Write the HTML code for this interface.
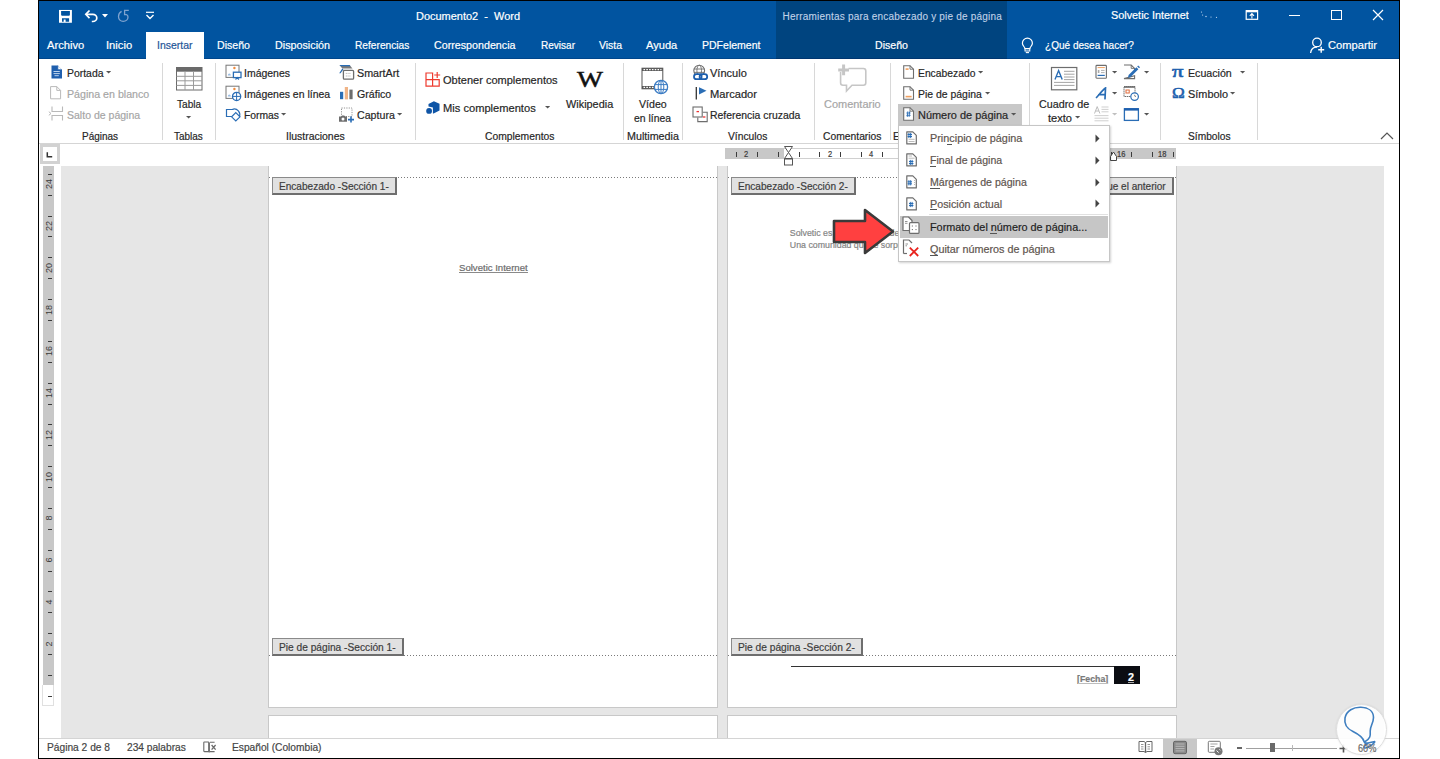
<!DOCTYPE html>
<html><head><meta charset="utf-8"><style>
html,body{margin:0;padding:0;width:1440px;height:759px;overflow:hidden;background:#fff;}
body{position:relative;font-family:"Liberation Sans", sans-serif;}
div{position:absolute;box-sizing:border-box;}
.t{white-space:pre;transform-origin:0 0;-webkit-text-stroke:0.2px currentColor;}
.r{white-space:pre;}
</style></head><body>
<div style="left:38px;top:0px;width:1362px;height:759px;background:#000;"></div>
<div style="left:39px;top:1px;width:1360px;height:58px;background:#0154a0;"></div>
<div style="left:39px;top:58px;width:1360px;height:1px;background:#00468c;"></div>
<div style="left:776px;top:1px;width:231px;height:58px;background:#00447f;"></div>
<div style="left:776px;top:58px;width:231px;height:1px;background:#003670;"></div>
<div style="left:39px;top:59px;width:1360px;height:699px;background:#ffffff;"></div>
<div style="left:146px;top:32px;width:58px;height:27px;background:#ffffff;"></div>
<div style="left:39px;top:143px;width:1360px;height:1px;background:#d5d5d5;"></div>
<div style="left:61px;top:166px;width:1323px;height:572px;background:#e6e6e6;"></div>
<div style="left:268px;top:166px;width:450px;height:542px;background:#fff;border:1px solid #c8c8c8;border-top:none;"></div>
<div style="left:727px;top:166px;width:450px;height:542px;background:#fff;border:1px solid #c8c8c8;border-top:none;"></div>
<div style="left:268px;top:715px;width:450px;height:23px;background:#fff;border:1px solid #c8c8c8;border-bottom:none;"></div>
<div style="left:727px;top:715px;width:450px;height:23px;background:#fff;border:1px solid #c8c8c8;border-bottom:none;"></div>
<div style="left:39px;top:738px;width:1360px;height:20px;background:#ffffff;"></div>
<div style="left:39px;top:738px;width:1360px;height:1px;background:#d4d4d4;"></div>
<div class="t" id="t0" style="left:416px;top:10.69px;font-size:11px;line-height:11px;color:#ffffff;font-weight:400;transform:scaleX(0.9967);">Documento2  -  Word</div>
<div class="t" id="t1" style="left:782.5px;top:12.04px;font-size:10px;line-height:10px;color:#c0d2e8;font-weight:400;letter-spacing:0.2px;-webkit-text-stroke:0.1px currentColor;">Herramientas para encabezado y pie de página</div>
<div class="t" id="t2" style="left:1110.5px;top:10.19px;font-size:11px;line-height:11px;color:#ffffff;font-weight:400;transform:scaleX(0.9857);">Solvetic Internet</div>
<div class="t" id="t3" style="left:47px;top:40.22px;font-size:11.5px;line-height:11.5px;color:#ffffff;font-weight:400;transform:scaleX(0.9724);">Archivo</div>
<div class="t" id="t4" style="left:105.5px;top:40.22px;font-size:11.5px;line-height:11.5px;color:#ffffff;font-weight:400;transform:scaleX(0.9755);">Inicio</div>
<div class="t" id="t5" style="left:216.7px;top:40.22px;font-size:11.5px;line-height:11.5px;color:#ffffff;font-weight:400;transform:scaleX(0.9215);">Diseño</div>
<div class="t" id="t6" style="left:274.5px;top:40.22px;font-size:11.5px;line-height:11.5px;color:#ffffff;font-weight:400;transform:scaleX(0.9352);">Disposición</div>
<div class="t" id="t7" style="left:354.7px;top:40.22px;font-size:11.5px;line-height:11.5px;color:#ffffff;font-weight:400;transform:scaleX(0.8847);">Referencias</div>
<div class="t" id="t8" style="left:434.25px;top:40.22px;font-size:11.5px;line-height:11.5px;color:#ffffff;font-weight:400;transform:scaleX(0.9304);">Correspondencia</div>
<div class="t" id="t9" style="left:540.5px;top:40.22px;font-size:11.5px;line-height:11.5px;color:#ffffff;font-weight:400;transform:scaleX(0.8721);">Revisar</div>
<div class="t" id="t10" style="left:598.75px;top:40.22px;font-size:11.5px;line-height:11.5px;color:#ffffff;font-weight:400;transform:scaleX(0.9070);">Vista</div>
<div class="t" id="t11" style="left:646.25px;top:40.22px;font-size:11.5px;line-height:11.5px;color:#ffffff;font-weight:400;transform:scaleX(0.9643);">Ayuda</div>
<div class="t" id="t12" style="left:702px;top:40.22px;font-size:11.5px;line-height:11.5px;color:#ffffff;font-weight:400;transform:scaleX(0.9152);">PDFelement</div>
<div class="t" id="t13" style="left:874.5px;top:40.22px;font-size:11.5px;line-height:11.5px;color:#ffffff;font-weight:400;transform:scaleX(0.9215);">Diseño</div>
<div class="t" id="t14" style="left:1045px;top:40.22px;font-size:11.5px;line-height:11.5px;color:#ffffff;font-weight:400;transform:scaleX(0.8730);">¿Qué desea hacer?</div>
<div class="t" id="t15" style="left:1328px;top:40.22px;font-size:11.5px;line-height:11.5px;color:#ffffff;font-weight:400;transform:scaleX(0.9706);">Compartir</div>
<div class="t" id="t16" style="left:156.7px;top:40.22px;font-size:11.5px;line-height:11.5px;color:#1f5597;font-weight:400;transform:scaleX(0.9103);">Insertar</div>
<div class="t" id="t17" style="left:66.75px;top:67.67px;font-size:11.5px;line-height:11.5px;color:#262626;font-weight:400;transform:scaleX(0.9061);">Portada</div>
<div class="t" id="t18" style="left:66.75px;top:88.77px;font-size:11.5px;line-height:11.5px;color:#a6a6a6;font-weight:400;transform:scaleX(0.9253);">Página en blanco</div>
<div class="t" id="t19" style="left:66.75px;top:109.87px;font-size:11.5px;line-height:11.5px;color:#a6a6a6;font-weight:400;transform:scaleX(0.9151);">Salto de página</div>
<div class="t" id="t20" style="left:82px;top:130.87px;font-size:11.5px;line-height:11.5px;color:#262626;font-weight:400;transform:scaleX(0.8662);">Páginas</div>
<div class="t" id="t21" style="left:177px;top:98.87px;font-size:11.5px;line-height:11.5px;color:#262626;font-weight:400;transform:scaleX(0.8764);">Tabla</div>
<div class="t" id="t22" style="left:174px;top:130.87px;font-size:11.5px;line-height:11.5px;color:#262626;font-weight:400;transform:scaleX(0.8647);">Tablas</div>
<div class="t" id="t23" style="left:243.5px;top:67.67px;font-size:11.5px;line-height:11.5px;color:#262626;font-weight:400;transform:scaleX(0.9106);">Imágenes</div>
<div class="t" id="t24" style="left:243.5px;top:88.77px;font-size:11.5px;line-height:11.5px;color:#262626;font-weight:400;transform:scaleX(0.9099);">Imágenes en línea</div>
<div class="t" id="t25" style="left:243.5px;top:109.87px;font-size:11.5px;line-height:11.5px;color:#262626;font-weight:400;transform:scaleX(0.8978);">Formas</div>
<div class="t" id="t26" style="left:356.6px;top:67.67px;font-size:11.5px;line-height:11.5px;color:#262626;font-weight:400;transform:scaleX(0.9322);">SmartArt</div>
<div class="t" id="t27" style="left:356.6px;top:88.77px;font-size:11.5px;line-height:11.5px;color:#262626;font-weight:400;transform:scaleX(0.9224);">Gráfico</div>
<div class="t" id="t28" style="left:356.6px;top:109.87px;font-size:11.5px;line-height:11.5px;color:#262626;font-weight:400;transform:scaleX(0.9262);">Captura</div>
<div class="t" id="t29" style="left:285.5px;top:130.87px;font-size:11.5px;line-height:11.5px;color:#262626;font-weight:400;transform:scaleX(0.9092);">Ilustraciones</div>
<div class="t" id="t30" style="left:443.3px;top:75.47px;font-size:11.5px;line-height:11.5px;color:#262626;font-weight:400;transform:scaleX(0.9586);">Obtener complementos</div>
<div class="t" id="t31" style="left:443.3px;top:103.47px;font-size:11.5px;line-height:11.5px;color:#262626;font-weight:400;transform:scaleX(0.9669);">Mis complementos</div>
<div class="t" id="t32" style="left:566px;top:98.97px;font-size:11.5px;line-height:11.5px;color:#262626;font-weight:400;transform:scaleX(0.9467);">Wikipedia</div>
<div class="t" id="t33" style="left:484.6px;top:130.87px;font-size:11.5px;line-height:11.5px;color:#262626;font-weight:400;transform:scaleX(0.8973);">Complementos</div>
<div class="t" id="t34" style="left:639px;top:98.97px;font-size:11.5px;line-height:11.5px;color:#262626;font-weight:400;transform:scaleX(0.9214);">Vídeo</div>
<div class="t" id="t35" style="left:634px;top:113.47px;font-size:11.5px;line-height:11.5px;color:#262626;font-weight:400;transform:scaleX(0.9038);">en línea</div>
<div class="t" id="t36" style="left:626.8px;top:130.87px;font-size:11.5px;line-height:11.5px;color:#262626;font-weight:400;transform:scaleX(0.9333);">Multimedia</div>
<div class="t" id="t37" style="left:710px;top:67.67px;font-size:11.5px;line-height:11.5px;color:#262626;font-weight:400;transform:scaleX(0.9593);">Vínculo</div>
<div class="t" id="t38" style="left:710px;top:88.77px;font-size:11.5px;line-height:11.5px;color:#262626;font-weight:400;transform:scaleX(0.9675);">Marcador</div>
<div class="t" id="t39" style="left:710px;top:109.87px;font-size:11.5px;line-height:11.5px;color:#262626;font-weight:400;transform:scaleX(0.9064);">Referencia cruzada</div>
<div class="t" id="t40" style="left:728px;top:130.87px;font-size:11.5px;line-height:11.5px;color:#262626;font-weight:400;transform:scaleX(0.8932);">Vínculos</div>
<div class="t" id="t41" style="left:823.8px;top:98.97px;font-size:11.5px;line-height:11.5px;color:#a6a6a6;font-weight:400;transform:scaleX(0.9537);">Comentario</div>
<div class="t" id="t42" style="left:823px;top:130.87px;font-size:11.5px;line-height:11.5px;color:#262626;font-weight:400;transform:scaleX(0.8972);">Comentarios</div>
<div class="t" id="t43" style="left:918.4px;top:67.67px;font-size:11.5px;line-height:11.5px;color:#262626;font-weight:400;transform:scaleX(0.8975);">Encabezado</div>
<div class="t" id="t44" style="left:918.4px;top:88.77px;font-size:11.5px;line-height:11.5px;color:#262626;font-weight:400;transform:scaleX(0.9070);">Pie de página</div>
<div class="t" id="t45" style="left:1038.6px;top:98.97px;font-size:11.5px;line-height:11.5px;color:#262626;font-weight:400;transform:scaleX(0.9345);">Cuadro de</div>
<div class="t" id="t46" style="left:1048px;top:113.47px;font-size:11.5px;line-height:11.5px;color:#262626;font-weight:400;transform:scaleX(0.9624);">texto</div>
<div class="t" id="t47" style="left:1188px;top:67.67px;font-size:11.5px;line-height:11.5px;color:#262626;font-weight:400;transform:scaleX(0.9247);">Ecuación</div>
<div class="t" id="t48" style="left:1188px;top:88.77px;font-size:11.5px;line-height:11.5px;color:#262626;font-weight:400;transform:scaleX(0.9481);">Símbolo</div>
<div class="t" id="t49" style="left:1187.5px;top:130.87px;font-size:11.5px;line-height:11.5px;color:#262626;font-weight:400;transform:scaleX(0.8866);">Símbolos</div>
<div class="t" id="t50" style="left:893px;top:130.87px;font-size:11.5px;line-height:11.5px;color:#262626;font-weight:400;transform:scaleX(0.9124);">E</div>
<div style="left:898px;top:104px;width:124px;height:21px;background:#c8c8c8;"></div>
<div class="t" id="t51" style="left:918.4px;top:109.87px;font-size:11.5px;line-height:11.5px;color:#262626;font-weight:400;transform:scaleX(0.9522);">Número de página</div>
<div class="t" id="t52" style="left:46.5px;top:741.69px;font-size:11px;line-height:11px;color:#444444;font-weight:400;transform:scaleX(0.9280);">Página 2 de 8</div>
<div class="t" id="t53" style="left:126.5px;top:741.69px;font-size:11px;line-height:11px;color:#444444;font-weight:400;transform:scaleX(0.9244);">234 palabras</div>
<div class="t" id="t54" style="left:231.75px;top:741.69px;font-size:11px;line-height:11px;color:#444444;font-weight:400;transform:scaleX(0.9264);">Español (Colombia)</div>
<div style="left:162px;top:63px;width:1px;height:77px;background:#d8d8d8;"></div>
<div style="left:215px;top:63px;width:1px;height:77px;background:#d8d8d8;"></div>
<div style="left:415px;top:63px;width:1px;height:77px;background:#d8d8d8;"></div>
<div style="left:623px;top:63px;width:1px;height:77px;background:#d8d8d8;"></div>
<div style="left:682px;top:63px;width:1px;height:77px;background:#d8d8d8;"></div>
<div style="left:814px;top:63px;width:1px;height:77px;background:#d8d8d8;"></div>
<div style="left:890px;top:63px;width:1px;height:77px;background:#d8d8d8;"></div>
<div style="left:1029px;top:63px;width:1px;height:77px;background:#d8d8d8;"></div>
<div style="left:1160px;top:63px;width:1px;height:77px;background:#d8d8d8;"></div>
<div style="left:1257px;top:63px;width:1px;height:77px;background:#d8d8d8;"></div>
<svg style="position:absolute;left:106.0px;top:71.2px;" width="5.2" height="3.6" viewBox="0 0 5.2 3.6"><path d="M0 0 L5.2 0 L2.6 2.6 Z" fill="#555"/></svg>
<svg style="position:absolute;left:281.4px;top:113.2px;" width="5.2" height="3.6" viewBox="0 0 5.2 3.6"><path d="M0 0 L5.2 0 L2.6 2.6 Z" fill="#555"/></svg>
<svg style="position:absolute;left:397.0px;top:113.2px;" width="5.2" height="3.6" viewBox="0 0 5.2 3.6"><path d="M0 0 L5.2 0 L2.6 2.6 Z" fill="#555"/></svg>
<svg style="position:absolute;left:544.9px;top:106.2px;" width="5.2" height="3.6" viewBox="0 0 5.2 3.6"><path d="M0 0 L5.2 0 L2.6 2.6 Z" fill="#555"/></svg>
<svg style="position:absolute;left:978.1px;top:71.2px;" width="5.2" height="3.6" viewBox="0 0 5.2 3.6"><path d="M0 0 L5.2 0 L2.6 2.6 Z" fill="#555"/></svg>
<svg style="position:absolute;left:985.4px;top:92.2px;" width="5.2" height="3.6" viewBox="0 0 5.2 3.6"><path d="M0 0 L5.2 0 L2.6 2.6 Z" fill="#555"/></svg>
<svg style="position:absolute;left:1010.6999999999999px;top:113.2px;" width="5.2" height="3.6" viewBox="0 0 5.2 3.6"><path d="M0 0 L5.2 0 L2.6 2.6 Z" fill="#555"/></svg>
<svg style="position:absolute;left:1074.9px;top:116.2px;" width="5.2" height="3.6" viewBox="0 0 5.2 3.6"><path d="M0 0 L5.2 0 L2.6 2.6 Z" fill="#555"/></svg>
<svg style="position:absolute;left:1112.2px;top:71.2px;" width="5.2" height="3.6" viewBox="0 0 5.2 3.6"><path d="M0 0 L5.2 0 L2.6 2.6 Z" fill="#555"/></svg>
<svg style="position:absolute;left:1112.2px;top:92.2px;" width="5.2" height="3.6" viewBox="0 0 5.2 3.6"><path d="M0 0 L5.2 0 L2.6 2.6 Z" fill="#555"/></svg>
<svg style="position:absolute;left:1144.4px;top:71.2px;" width="5.2" height="3.6" viewBox="0 0 5.2 3.6"><path d="M0 0 L5.2 0 L2.6 2.6 Z" fill="#555"/></svg>
<svg style="position:absolute;left:1144.4px;top:113.2px;" width="5.2" height="3.6" viewBox="0 0 5.2 3.6"><path d="M0 0 L5.2 0 L2.6 2.6 Z" fill="#555"/></svg>
<svg style="position:absolute;left:1240.4px;top:71.2px;" width="5.2" height="3.6" viewBox="0 0 5.2 3.6"><path d="M0 0 L5.2 0 L2.6 2.6 Z" fill="#555"/></svg>
<svg style="position:absolute;left:1230.4px;top:92.2px;" width="5.2" height="3.6" viewBox="0 0 5.2 3.6"><path d="M0 0 L5.2 0 L2.6 2.6 Z" fill="#555"/></svg>
<svg style="position:absolute;left:186.4px;top:116.2px;" width="5.2" height="3.6" viewBox="0 0 5.2 3.6"><path d="M0 0 L5.2 0 L2.6 2.6 Z" fill="#555"/></svg>
<svg style="position:absolute;left:1112.2px;top:113.2px;" width="5.2" height="3.6" viewBox="0 0 5.2 3.6"><path d="M0 0 L5.2 0 L2.6 2.6 Z" fill="#c0c0c0"/></svg>
<svg style="position:absolute;left:1380px;top:132px;" width="14" height="8" viewBox="0 0 14 8"><path d="M1 7 L7 1 L13 7" stroke="#555" stroke-width="1.2" fill="none"/></svg>
<div style="left:40px;top:144px;width:20px;height:20px;background:#fff;border:3px solid #d2d2d2;"></div>
<svg style="position:absolute;left:46px;top:151px;" width="8" height="8" viewBox="0 0 8 8"><path d="M1.3 1.2 V5.8 H6.2" stroke="#333" stroke-width="1.5" fill="none"/></svg>
<div style="left:725px;top:148px;width:60px;height:11px;background:#c8c8c8;"></div>
<div style="left:784px;top:148px;width:326px;height:11px;background:#fff;border-top:1px solid #d0d0d0;border-bottom:1px solid #d0d0d0;"></div>
<div style="left:1110px;top:148px;width:66px;height:11px;background:#c8c8c8;"></div>
<div style="left:736px;top:152px;width:1px;height:5px;background:#3c3c3c;"></div>
<div style="left:757px;top:152px;width:1px;height:5px;background:#3c3c3c;"></div>
<div style="left:778px;top:152px;width:1px;height:5px;background:#3c3c3c;"></div>
<div style="left:799px;top:152px;width:1px;height:5px;background:#3c3c3c;"></div>
<div style="left:819px;top:152px;width:1px;height:5px;background:#3c3c3c;"></div>
<div style="left:840px;top:152px;width:1px;height:5px;background:#3c3c3c;"></div>
<div style="left:861px;top:152px;width:1px;height:5px;background:#3c3c3c;"></div>
<div style="left:882px;top:152px;width:1px;height:5px;background:#3c3c3c;"></div>
<div style="left:903px;top:152px;width:1px;height:5px;background:#3c3c3c;"></div>
<div style="left:923px;top:152px;width:1px;height:5px;background:#3c3c3c;"></div>
<div style="left:944px;top:152px;width:1px;height:5px;background:#3c3c3c;"></div>
<div style="left:965px;top:152px;width:1px;height:5px;background:#3c3c3c;"></div>
<div style="left:986px;top:152px;width:1px;height:5px;background:#3c3c3c;"></div>
<div style="left:1007px;top:152px;width:1px;height:5px;background:#3c3c3c;"></div>
<div style="left:1027px;top:152px;width:1px;height:5px;background:#3c3c3c;"></div>
<div style="left:1048px;top:152px;width:1px;height:5px;background:#3c3c3c;"></div>
<div style="left:1069px;top:152px;width:1px;height:5px;background:#3c3c3c;"></div>
<div style="left:1090px;top:152px;width:1px;height:5px;background:#3c3c3c;"></div>
<div style="left:1111px;top:152px;width:1px;height:5px;background:#3c3c3c;"></div>
<div style="left:1131px;top:152px;width:1px;height:5px;background:#3c3c3c;"></div>
<div style="left:1152px;top:152px;width:1px;height:5px;background:#3c3c3c;"></div>
<div style="left:1173px;top:152px;width:1px;height:5px;background:#3c3c3c;"></div>
<div class="t" id="t55" style="left:744.3px;top:149.88px;font-size:9px;line-height:9px;color:#3a3a3a;font-weight:400;transform:scaleX(0.8374);">2</div>
<div class="t" id="t56" style="left:827.5px;top:149.88px;font-size:9px;line-height:9px;color:#3a3a3a;font-weight:400;transform:scaleX(0.8374);">2</div>
<div class="t" id="t57" style="left:869.1px;top:149.88px;font-size:9px;line-height:9px;color:#3a3a3a;font-weight:400;transform:scaleX(0.8374);">4</div>
<div class="t" id="t58" style="left:910.7px;top:149.88px;font-size:9px;line-height:9px;color:#3a3a3a;font-weight:400;transform:scaleX(0.8374);">6</div>
<div class="t" id="t59" style="left:952.3px;top:149.88px;font-size:9px;line-height:9px;color:#3a3a3a;font-weight:400;transform:scaleX(0.8374);">8</div>
<div class="t" id="t60" style="left:991.8px;top:149.88px;font-size:9px;line-height:9px;color:#3a3a3a;font-weight:400;transform:scaleX(0.8387);">10</div>
<div class="t" id="t61" style="left:1033.4px;top:149.88px;font-size:9px;line-height:9px;color:#3a3a3a;font-weight:400;transform:scaleX(0.8387);">12</div>
<div class="t" id="t62" style="left:1075.0px;top:149.88px;font-size:9px;line-height:9px;color:#3a3a3a;font-weight:400;transform:scaleX(0.8387);">14</div>
<div class="t" id="t63" style="left:1116.6000000000001px;top:149.88px;font-size:9px;line-height:9px;color:#3a3a3a;font-weight:400;transform:scaleX(0.8387);">16</div>
<div class="t" id="t64" style="left:1158.2px;top:149.88px;font-size:9px;line-height:9px;color:#3a3a3a;font-weight:400;transform:scaleX(0.8387);">18</div>
<svg style="position:absolute;left:783px;top:145px;" width="11" height="21" viewBox="0 0 11 21"><path d="M1.5 1.5 H9.5 L5.5 7.5 L9.5 13.5 H1.5 L5.5 7.5 Z" fill="#fff" stroke="#555" stroke-width="1"/><rect x="1.5" y="14" width="8" height="6" fill="#fff" stroke="#555" stroke-width="1"/></svg>
<svg style="position:absolute;left:1109px;top:150px;" width="9" height="12" viewBox="0 0 9 12"><path d="M1.5 10.5 H7.5 V6.5 L4.5 2 L1.5 6.5 Z" fill="#fff" stroke="#444" stroke-width="1"/></svg>
<div style="left:43px;top:166px;width:11px;height:519px;background:#c8c8c8;"></div>
<div style="left:42px;top:685px;width:12px;height:21px;background:#fff;border:1px solid #e0e0e0;border-top:none;"></div>
<div style="left:48px;top:696px;width:4px;height:1px;background:#3c3c3c;"></div>
<div style="left:48px;top:675px;width:4px;height:1px;background:#3c3c3c;"></div>
<div style="left:48px;top:654px;width:4px;height:1px;background:#3c3c3c;"></div>
<div style="left:48px;top:633px;width:4px;height:1px;background:#3c3c3c;"></div>
<div style="left:48px;top:612px;width:4px;height:1px;background:#3c3c3c;"></div>
<div style="left:48px;top:591px;width:4px;height:1px;background:#3c3c3c;"></div>
<div style="left:48px;top:571px;width:4px;height:1px;background:#3c3c3c;"></div>
<div style="left:48px;top:550px;width:4px;height:1px;background:#3c3c3c;"></div>
<div style="left:48px;top:529px;width:4px;height:1px;background:#3c3c3c;"></div>
<div style="left:48px;top:508px;width:4px;height:1px;background:#3c3c3c;"></div>
<div style="left:48px;top:487px;width:4px;height:1px;background:#3c3c3c;"></div>
<div style="left:48px;top:466px;width:4px;height:1px;background:#3c3c3c;"></div>
<div style="left:48px;top:445px;width:4px;height:1px;background:#3c3c3c;"></div>
<div style="left:48px;top:424px;width:4px;height:1px;background:#3c3c3c;"></div>
<div style="left:48px;top:404px;width:4px;height:1px;background:#3c3c3c;"></div>
<div style="left:48px;top:383px;width:4px;height:1px;background:#3c3c3c;"></div>
<div style="left:48px;top:362px;width:4px;height:1px;background:#3c3c3c;"></div>
<div style="left:48px;top:341px;width:4px;height:1px;background:#3c3c3c;"></div>
<div style="left:48px;top:320px;width:4px;height:1px;background:#3c3c3c;"></div>
<div style="left:48px;top:299px;width:4px;height:1px;background:#3c3c3c;"></div>
<div style="left:48px;top:278px;width:4px;height:1px;background:#3c3c3c;"></div>
<div style="left:48px;top:257px;width:4px;height:1px;background:#3c3c3c;"></div>
<div style="left:48px;top:236px;width:4px;height:1px;background:#3c3c3c;"></div>
<div style="left:48px;top:216px;width:4px;height:1px;background:#3c3c3c;"></div>
<div style="left:48px;top:195px;width:4px;height:1px;background:#3c3c3c;"></div>
<div style="left:48px;top:174px;width:4px;height:1px;background:#3c3c3c;"></div>
<div class="r" style="left:49.4px;top:643.64px;width:0;height:0"><div class="r" style="left:0;top:0;font-size:9px;line-height:9px;color:#3a3a3a;transform:translate(-50%,-50%) rotate(-90deg)">2</div></div>
<div class="r" style="left:49.4px;top:601.88px;width:0;height:0"><div class="r" style="left:0;top:0;font-size:9px;line-height:9px;color:#3a3a3a;transform:translate(-50%,-50%) rotate(-90deg)">4</div></div>
<div class="r" style="left:49.4px;top:560.12px;width:0;height:0"><div class="r" style="left:0;top:0;font-size:9px;line-height:9px;color:#3a3a3a;transform:translate(-50%,-50%) rotate(-90deg)">6</div></div>
<div class="r" style="left:49.4px;top:518.36px;width:0;height:0"><div class="r" style="left:0;top:0;font-size:9px;line-height:9px;color:#3a3a3a;transform:translate(-50%,-50%) rotate(-90deg)">8</div></div>
<div class="r" style="left:49.4px;top:476.60px;width:0;height:0"><div class="r" style="left:0;top:0;font-size:9px;line-height:9px;color:#3a3a3a;transform:translate(-50%,-50%) rotate(-90deg)">10</div></div>
<div class="r" style="left:49.4px;top:434.84px;width:0;height:0"><div class="r" style="left:0;top:0;font-size:9px;line-height:9px;color:#3a3a3a;transform:translate(-50%,-50%) rotate(-90deg)">12</div></div>
<div class="r" style="left:49.4px;top:393.08px;width:0;height:0"><div class="r" style="left:0;top:0;font-size:9px;line-height:9px;color:#3a3a3a;transform:translate(-50%,-50%) rotate(-90deg)">14</div></div>
<div class="r" style="left:49.4px;top:351.32px;width:0;height:0"><div class="r" style="left:0;top:0;font-size:9px;line-height:9px;color:#3a3a3a;transform:translate(-50%,-50%) rotate(-90deg)">16</div></div>
<div class="r" style="left:49.4px;top:309.56px;width:0;height:0"><div class="r" style="left:0;top:0;font-size:9px;line-height:9px;color:#3a3a3a;transform:translate(-50%,-50%) rotate(-90deg)">18</div></div>
<div class="r" style="left:49.4px;top:267.80px;width:0;height:0"><div class="r" style="left:0;top:0;font-size:9px;line-height:9px;color:#3a3a3a;transform:translate(-50%,-50%) rotate(-90deg)">20</div></div>
<div class="r" style="left:49.4px;top:226.04px;width:0;height:0"><div class="r" style="left:0;top:0;font-size:9px;line-height:9px;color:#3a3a3a;transform:translate(-50%,-50%) rotate(-90deg)">22</div></div>
<div class="r" style="left:49.4px;top:184.28px;width:0;height:0"><div class="r" style="left:0;top:0;font-size:9px;line-height:9px;color:#3a3a3a;transform:translate(-50%,-50%) rotate(-90deg)">24</div></div>
<div style="left:269px;top:177px;width:448px;height:1px;background-image:linear-gradient(to right,#7a7a7a 50%,transparent 50%);background-size:3px 1px;"></div>
<div style="left:728px;top:177px;width:448px;height:1px;background-image:linear-gradient(to right,#7a7a7a 50%,transparent 50%);background-size:3px 1px;"></div>
<div style="left:269px;top:655px;width:448px;height:1px;background-image:linear-gradient(to right,#7a7a7a 50%,transparent 50%);background-size:3px 1px;"></div>
<div style="left:728px;top:655px;width:448px;height:1px;background-image:linear-gradient(to right,#7a7a7a 50%,transparent 50%);background-size:3px 1px;"></div>
<div style="left:272px;top:177px;width:125px;height:18px;background:#e1e1e1;border:1px solid #8a8a8a;border-right:2px solid #6e6e6e;border-bottom:2px solid #6e6e6e;"></div>
<div class="t" id="t65" style="left:279.4px;top:181.09px;font-size:11px;line-height:11px;color:#3c3c3c;font-weight:400;transform:scaleX(0.9161);">Encabezado -Sección 1-</div>
<div style="left:731px;top:177px;width:125px;height:18px;background:#e1e1e1;border:1px solid #8a8a8a;border-right:2px solid #6e6e6e;border-bottom:2px solid #6e6e6e;"></div>
<div class="t" id="t66" style="left:738.2px;top:181.09px;font-size:11px;line-height:11px;color:#3c3c3c;font-weight:400;transform:scaleX(0.9161);">Encabezado -Sección 2-</div>
<div style="left:272px;top:638px;width:132px;height:18px;background:#e1e1e1;border:1px solid #8a8a8a;border-right:2px solid #6e6e6e;border-bottom:2px solid #6e6e6e;"></div>
<div class="t" id="t67" style="left:279.4px;top:642.09px;font-size:11px;line-height:11px;color:#3c3c3c;font-weight:400;transform:scaleX(0.9256);">Pie de página -Sección 1-</div>
<div style="left:731px;top:638px;width:132px;height:18px;background:#e1e1e1;border:1px solid #8a8a8a;border-right:2px solid #6e6e6e;border-bottom:2px solid #6e6e6e;"></div>
<div class="t" id="t68" style="left:738.2px;top:642.09px;font-size:11px;line-height:11px;color:#3c3c3c;font-weight:400;transform:scaleX(0.9272);">Pie de página -Sección 2-</div>
<div style="left:1060px;top:177px;width:114px;height:18px;background:#e1e1e1;border:1px solid #8a8a8a;border-right:2px solid #6e6e6e;border-bottom:2px solid #6e6e6e;"></div>
<div class="t" id="t69" style="left:1076.6px;top:181.09px;font-size:11px;line-height:11px;color:#3c3c3c;font-weight:400;transform:scaleX(0.9122);">Igual que el anterior</div>
<div class="t" id="t70" style="left:459px;top:263.46px;font-size:9.5px;line-height:9.5px;color:#6b6b6b;font-weight:400;transform:scaleX(1.0084);">Solvetic Internet</div>
<div style="left:459px;top:272px;width:69px;height:1px;background:#8a8a8a;"></div>
<div class="t" id="t71" style="left:789.8px;top:228.85px;font-size:8.8px;line-height:8.8px;color:#858585;font-weight:400;">Solvetic es la comunidad de tecnología</div>
<div class="t" id="t72" style="left:789.8px;top:240.75px;font-size:8.8px;line-height:8.8px;color:#858585;font-weight:400;">Una comunidad que te sorprende</div>
<div style="left:791px;top:665.5px;width:323px;height:1.2px;background:#333;"></div>
<div style="left:1114px;top:666px;width:26px;height:18px;background:#0b0d12;"></div>
<div class="t" id="t73" style="left:1127.6px;top:672.53px;font-size:10px;line-height:10px;color:#ffffff;font-weight:700;transform:scaleX(1.0787);">2</div>
<div style="left:1127.5px;top:681.5px;width:6.5px;height:1px;background:#aaaaaa;"></div>
<div class="t" id="t74" style="left:1077.4px;top:675.00px;font-size:8.5px;line-height:8.5px;color:#7a7a7a;font-weight:700;transform:scaleX(1.0319);">[Fecha]</div>
<div style="left:1078px;top:683px;width:30px;height:1px;background:#bdbdbd;"></div>
<svg style="position:absolute;left:831px;top:207px;" width="66" height="49" viewBox="0 0 66 49"><path d="M3 14 H34 V3 L62 24.5 L34 46 V35 H3 Z" fill="#ff4040" stroke="#3a3a3a" stroke-width="2.6" stroke-linejoin="round"/></svg>
<div style="left:898px;top:125px;width:212px;height:137px;background:#fff;border:1px solid #c6c6c6;box-shadow:1px 1px 2px rgba(0,0,0,0.18);"></div>
<div style="left:929px;top:214px;width:179px;height:1px;background:#e1e1e1;"></div>
<div style="left:900px;top:216px;width:208px;height:22px;background:#c6c6c6;"></div>
<div class="t" id="t75" style="left:929.8px;top:132.87px;font-size:11.5px;line-height:11.5px;color:#5e544e;font-weight:400;transform:scaleX(0.9445);">Principio de página</div>
<div class="t" id="t76" style="left:929.8px;top:154.77px;font-size:11.5px;line-height:11.5px;color:#5e544e;font-weight:400;transform:scaleX(0.9179);">Final de página</div>
<div class="t" id="t77" style="left:929.8px;top:176.97px;font-size:11.5px;line-height:11.5px;color:#5e544e;font-weight:400;transform:scaleX(0.9231);">Márgenes de página</div>
<div class="t" id="t78" style="left:929.8px;top:198.67px;font-size:11.5px;line-height:11.5px;color:#5e544e;font-weight:400;transform:scaleX(0.9333);">Posición actual</div>
<div class="t" id="t79" style="left:929.8px;top:222.37px;font-size:11.5px;line-height:11.5px;color:#1f1f1f;font-weight:400;transform:scaleX(0.9421);">Formato del número de página...</div>
<div class="t" id="t80" style="left:929.8px;top:244.27px;font-size:11.5px;line-height:11.5px;color:#5e544e;font-weight:400;transform:scaleX(0.9386);">Quitar números de página</div>
<svg style="position:absolute;left:1095px;top:134px;" width="5" height="9" viewBox="0 0 5 9"><path d="M0.5 0.5 L4.5 4.5 L0.5 8.5 Z" fill="#444"/></svg>
<svg style="position:absolute;left:1095px;top:155.5px;" width="5" height="9" viewBox="0 0 5 9"><path d="M0.5 0.5 L4.5 4.5 L0.5 8.5 Z" fill="#444"/></svg>
<svg style="position:absolute;left:1095px;top:177.5px;" width="5" height="9" viewBox="0 0 5 9"><path d="M0.5 0.5 L4.5 4.5 L0.5 8.5 Z" fill="#444"/></svg>
<svg style="position:absolute;left:1095px;top:199px;" width="5" height="9" viewBox="0 0 5 9"><path d="M0.5 0.5 L4.5 4.5 L0.5 8.5 Z" fill="#444"/></svg>
<svg style="position:absolute;left:58px;top:9px;" width="15" height="15" viewBox="0 0 15 15"><rect x="1" y="0.95" width="12.9" height="12.8" fill="#fff"/><path d="M3.1 1.9 H11.9 V5.7 Q11.9 6.7 10.9 6.7 H4.1 Q3.1 6.7 3.1 5.7 Z" fill="#0154a0"/><path d="M4 9.2 H11.1 V12.8 H7.6 V10.5 H5.7 V12.8 H4 Z" fill="#0154a0"/></svg>
<svg style="position:absolute;left:84px;top:9px;" width="16" height="15" viewBox="0 0 16 15"><path d="M5.5 1.5 L1.8 5.3 L5.5 9.1" stroke="#fff" stroke-width="1.7" fill="none"/><path d="M2.3 5.3 H8.8 A4 3.6 0 0 1 8.8 12.5 H7.8" stroke="#fff" stroke-width="1.7" fill="none"/></svg>
<svg style="position:absolute;left:102px;top:14px;" width="6" height="4" viewBox="0 0 6 4"><path d="M0 0 H6 L3 3.5 Z" fill="#fff"/></svg>
<svg style="position:absolute;left:114px;top:6px;" width="20" height="20" viewBox="0 0 20 20"><path d="M7.6 5.3 C5.2 6.5 4.5 8.5 4.5 10.5 C4.5 13.5 6.6 15.3 9.2 15.3 C12 15.3 14 13.3 14 10.9 C14 9.6 13.4 8.8 12.3 8.6 H10.6 V4.4 H14.8" stroke="#7fa3cf" stroke-width="1.3" fill="none"/></svg>
<svg style="position:absolute;left:145px;top:11px;" width="10" height="9" viewBox="0 0 10 9"><path d="M1 1.3 H9" stroke="#fff" stroke-width="1.2"/><path d="M1.5 4 L5 7.5 L8.5 4" stroke="#fff" stroke-width="1.4" fill="none"/></svg>
<svg style="position:absolute;left:1200px;top:10px;" width="19" height="9" viewBox="0 0 19 9"><circle cx="1.5" cy="2" r="0.6" fill="#cfe0f5"/><circle cx="2.6" cy="5" r="0.6" fill="#cfe0f5"/><circle cx="6" cy="6.5" r="0.7" fill="#cfe0f5"/><circle cx="11" cy="7" r="0.6" fill="#cfe0f5"/><circle cx="16.5" cy="7.3" r="0.6" fill="#cfe0f5"/></svg>
<svg style="position:absolute;left:1245px;top:9px;" width="14" height="12" viewBox="0 0 14 12"><rect x="1.2" y="1.7" width="11.4" height="8.6" stroke="#fff" stroke-width="1.2" fill="none"/><rect x="1" y="1" width="12" height="2.3" fill="#fff"/><path d="M6.9 9.5 V5 M4.8 6.8 L6.9 4.6 L9 6.8" stroke="#fff" stroke-width="1.1" fill="none"/></svg>
<div style="left:1289px;top:14.5px;width:10.5px;height:1.3px;background:#fff;"></div>
<div style="left:1331px;top:10px;width:10.5px;height:9.8px;border:1.2px solid #fff;"></div>
<svg style="position:absolute;left:1372px;top:9px;" width="12" height="12" viewBox="0 0 12 12"><path d="M1 1 L11 11 M11 1 L1 11" stroke="#fff" stroke-width="1.2"/></svg>
<svg style="position:absolute;left:1020px;top:37px;" width="15" height="17" viewBox="0 0 15 17"><path d="M5 11.6 C4.6 9.8 2.4 8.6 2.4 6.2 A5 5 0 0 1 12.4 6.2 C12.4 8.6 10.2 9.8 9.8 11.6 Z" stroke="#fff" stroke-width="1.2" fill="none"/><rect x="5" y="11.6" width="4.8" height="2.4" stroke="#fff" stroke-width="1" fill="none"/><path d="M5.8 15.6 H9" stroke="#fff" stroke-width="1.1"/></svg>
<svg style="position:absolute;left:1308px;top:36px;" width="18" height="19" viewBox="0 0 18 19"><circle cx="9" cy="6.4" r="4.3" stroke="#fff" stroke-width="1.3" fill="none"/><path d="M2.6 17 C3 13.5 5.5 11 9 11" stroke="#fff" stroke-width="1.3" fill="none"/><path d="M13.2 10.8 V16.8 M10.2 13.8 H16.2" stroke="#fff" stroke-width="1.4"/></svg>
<svg style="position:absolute;left:51px;top:65px;" width="12" height="15" viewBox="0 0 12 15"><path d="M0.5 0.6 H6.8 L11 4.8 V13.6 H0.5 Z" fill="#1f5fae"/><path d="M6.8 0.6 V4.8 H11" fill="#fff" stroke="#1f5fae" stroke-width="0.8"/><path d="M2.5 6.5 H8.8 M2.5 8.6 H8.8 M3.5 10.7 H7.8" stroke="#cfe0f3" stroke-width="0.9"/></svg>
<svg style="position:absolute;left:50px;top:86px;" width="12" height="14" viewBox="0 0 12 14"><path d="M0.6 0.6 H6.8 L10.6 4.4 V12.8 H0.6 Z" fill="#fff" stroke="#b9b9b9" stroke-width="1"/><path d="M6.8 0.6 V4.4 H10.6" fill="none" stroke="#b9b9b9" stroke-width="1"/></svg>
<svg style="position:absolute;left:48px;top:106px;" width="16" height="15" viewBox="0 0 16 15"><path d="M4 0.5 V5.5 H14.5 V0.5 M4 14.5 V9.5 H14.5 V14.5" stroke="#b9b9b9" stroke-width="1.1" fill="none"/><path d="M0.8 5.7 L3 7.5 L0.8 9.3" stroke="#b9b9b9" stroke-width="1" fill="none"/></svg>
<svg style="position:absolute;left:176px;top:67px;" width="27" height="24" viewBox="0 0 27 24"><rect x="0.5" y="0.5" width="25.5" height="22.5" fill="#fff" stroke="#6a6a6a" stroke-width="1"/><rect x="0.5" y="0.5" width="25.5" height="4.2" fill="#6a6a6a"/><path d="M0.5 9.3 H26 M0.5 13.8 H26 M0.5 18.4 H26 M9 4.7 V23 M17.5 4.7 V23" stroke="#9a9a9a" stroke-width="1"/></svg>
<svg style="position:absolute;left:225px;top:64px;" width="17" height="17" viewBox="0 0 17 17"><rect x="1" y="1.2" width="13" height="12.2" fill="#fff" stroke="#777" stroke-width="1"/><circle cx="9.4" cy="4" r="1.2" fill="#f08a3c"/><path d="M2.8 11.5 C3 8.8 5.6 8.8 5.8 11.5 Z" fill="#9bbde3"/><rect x="8.4" y="8.2" width="7.6" height="5.4" fill="#fff" stroke="#2a6db5" stroke-width="1.3"/><path d="M10.5 15.5 L12.2 13.6 L13.9 15.5" stroke="#2a6db5" stroke-width="1.2" fill="none"/></svg>
<svg style="position:absolute;left:225px;top:85px;" width="17" height="17" viewBox="0 0 17 17"><rect x="1" y="1.2" width="13" height="12.2" fill="#fff" stroke="#777" stroke-width="1"/><circle cx="9.4" cy="4" r="1.2" fill="#f08a3c"/><path d="M2.8 11.5 C3 8.8 5.6 8.8 5.8 11.5 Z" fill="#9bbde3"/><circle cx="11.6" cy="11.4" r="4.1" fill="#fff" stroke="#2a6db5" stroke-width="1.3"/><path d="M7.6 11.4 H15.6 M11.6 7.4 V15.4" stroke="#2a6db5" stroke-width="1"/></svg>
<svg style="position:absolute;left:225px;top:106px;" width="17" height="17" viewBox="0 0 17 17"><path d="M8.5 10.5 H1.5 V3.5 H8.5" stroke="#2a6db5" stroke-width="1.2" fill="none"/><path d="M7.5 3.2 A5.6 5.6 0 0 1 14.3 10.8" stroke="#2a6db5" stroke-width="1.2" fill="none"/><path d="M10.8 6.6 L15 10.8 L10.8 15 L6.6 10.8 Z" fill="#fff" stroke="#2a6db5" stroke-width="1.2"/></svg>
<svg style="position:absolute;left:338px;top:64px;" width="17" height="17" viewBox="0 0 17 17"><path d="M1.5 1 H11.5 L14.5 4.4 H4.3 Z" fill="#7a7a7a"/><path d="M1.5 1 H11.5 L12.6 2.2 H2.8 Z" fill="#2a6db5"/><path d="M4.3 4.4 L1.2 9.2 L2.6 9.2 L5.5 5.2" fill="#2a6db5"/><rect x="5.4" y="6.4" width="10.2" height="8.8" rx="1" fill="#fff" stroke="#6d6d6d" stroke-width="1.3"/><path d="M7.8 9.4 H13 M7.8 12 H13" stroke="#9a9a9a" stroke-width="0.8" stroke-dasharray="1 0.8"/></svg>
<svg style="position:absolute;left:339px;top:86px;" width="15" height="15" viewBox="0 0 15 15"><rect x="1" y="5.8" width="3.2" height="7.4" fill="#2a6db5"/><rect x="5.8" y="1" width="3.2" height="12.4" fill="#f0b487"/><rect x="10.4" y="3.6" width="3.2" height="9.6" fill="#6d6d6d"/></svg>
<svg style="position:absolute;left:338px;top:107px;" width="17" height="16" viewBox="0 0 17 16"><rect x="3.5" y="1" width="10.5" height="8.5" fill="none" stroke="#888" stroke-width="0.9" stroke-dasharray="1.2 1.2"/><path d="M1 9.6 H3 L4 8.4 H6.2 L7.2 9.6 H9 V14.8 H1 Z" fill="#6d6d6d"/><circle cx="5" cy="12" r="1.5" fill="#fff"/><path d="M13 9.6 V15.6 M10 12.6 H16" stroke="#2a6db5" stroke-width="1.6"/></svg>
<svg style="position:absolute;left:425px;top:72px;" width="16" height="16" viewBox="0 0 16 16"><path d="M1 1 H7.6 V7.6 H1 Z M1 7.6 H7.6 V14.2 H1 Z M7.6 7.6 H14.2 V14.2 H7.6 Z" fill="none" stroke="#ee3b2f" stroke-width="1.2"/><path d="M12.2 0 V6 M9.2 3 H15.2" stroke="#ee3b2f" stroke-width="1.2"/></svg>
<svg style="position:absolute;left:422px;top:98px;" width="22" height="20" viewBox="0 0 22 20"><path d="M11.9 3.3 L17.5 5.8 V12.5 L11.6 15.6 H10.9 V9.4 L6.5 8.6 V6 Z" fill="#0f55a6"/><circle cx="7.1" cy="12.9" r="2.9" fill="#0f55a6"/></svg>
<div class="t" id="t81" style="left:576.6px;top:67.73px;font-size:23px;line-height:23px;color:#111;font-weight:400;transform:scaleX(1.1971);font-family:'Liberation Serif',serif;-webkit-text-stroke:0.5px #111;">W</div>
<svg style="position:absolute;left:641px;top:67px;" width="29" height="29" viewBox="0 0 29 29"><rect x="1" y="1.2" width="20.8" height="20.6" fill="#fff" stroke="#555" stroke-width="1"/><rect x="1" y="1.2" width="20.8" height="2.8" fill="#555"/><rect x="1" y="19" width="20.8" height="2.8" fill="#555"/><path d="M2.5 2.6 H20.5 M2.5 20.4 H20.5" stroke="#fff" stroke-width="1.4" stroke-dasharray="1.6 1.2"/><circle cx="20" cy="20" r="6.6" fill="#fff" stroke="#3b7cc4" stroke-width="1.3"/><ellipse cx="20" cy="20" rx="2.8" ry="6.4" fill="none" stroke="#3b7cc4" stroke-width="1"/><path d="M13.6 17.6 H26.4 M13.6 22.4 H26.4 M20 13.6 V26.4" stroke="#3b7cc4" stroke-width="1"/></svg>
<svg style="position:absolute;left:692px;top:64px;" width="17" height="17" viewBox="0 0 17 17"><circle cx="7.2" cy="6.6" r="5.4" fill="#fff" stroke="#6d6d6d" stroke-width="1.1"/><ellipse cx="7.2" cy="6.6" rx="2.3" ry="5.4" fill="none" stroke="#6d6d6d" stroke-width="0.9"/><path d="M1.8 5 H12.6 M2.2 8.4 H12.2" stroke="#6d6d6d" stroke-width="0.9"/><rect x="2" y="10.2" width="7.6" height="5" rx="2.5" fill="#fff" stroke="#1d5fae" stroke-width="1.8"/><rect x="7.6" y="10.2" width="7.6" height="5" rx="2.5" fill="none" stroke="#1d5fae" stroke-width="1.8"/></svg>
<svg style="position:absolute;left:693px;top:86px;" width="15" height="15" viewBox="0 0 15 15"><path d="M3.3 1 V13.5" stroke="#333" stroke-width="1.3"/><path d="M6 1.2 L13.5 4.8 L6 8.5 Z" fill="#2a6db5"/></svg>
<svg style="position:absolute;left:692px;top:106px;" width="17" height="17" viewBox="0 0 17 17"><rect x="1" y="1" width="9.2" height="10" fill="#fff" stroke="#6d6d6d" stroke-width="1.1"/><path d="M5.8 11.5 V15.6 H15.2 V6.2 H10.8" fill="none" stroke="#6d6d6d" stroke-width="1.1"/><path d="M4.5 5.6 H7" stroke="#e33" stroke-width="1.3"/><path d="M11 11 H13.4" stroke="#e33" stroke-width="1.3"/></svg>
<svg style="position:absolute;left:837px;top:63px;" width="32" height="31" viewBox="0 0 32 31"><path d="M3.6 9 V19.8 Q3.6 22.2 6 22.2 H9.5 V28 L15 22.2 H26.4 Q28.8 22.2 28.8 19.8 V7.9 Q28.8 5.5 26.4 5.5 H11.5" fill="none" stroke="#c6c6c6" stroke-width="1.6"/><path d="M6.6 1.5 V12.3 M1.2 6.9 H12" stroke="#c6c6c6" stroke-width="3"/></svg>
<svg style="position:absolute;left:902.5px;top:65px;" width="12" height="15" viewBox="0 0 12 15"><path d="M0.7 0.7 H7 L10.5 4.2 V13.3 H0.7 Z" fill="#fff" stroke="#6d6d6d" stroke-width="1.1"/><path d="M7 0.7 V4.2 H10.5" fill="none" stroke="#6d6d6d" stroke-width="0.9"/><rect x="2.6" y="3.3" width="3" height="1.6" fill="#f0a060"/></svg>
<svg style="position:absolute;left:902.5px;top:86px;" width="12" height="15" viewBox="0 0 12 15"><path d="M0.7 0.7 H7 L10.5 4.2 V13.3 H0.7 Z" fill="#fff" stroke="#6d6d6d" stroke-width="1.1"/><path d="M7 0.7 V4.2 H10.5" fill="none" stroke="#6d6d6d" stroke-width="0.9"/><rect x="2.6" y="9.8" width="6" height="1.6" fill="#f0a060"/></svg>
<svg style="position:absolute;left:902.5px;top:107px;" width="12" height="15" viewBox="0 0 12 15"><path d="M0.7 0.7 H7 L10.5 4.2 V13.3 H0.7 Z" fill="#fff" stroke="#6d6d6d" stroke-width="1.1"/><path d="M7 0.7 V4.2 H10.5" fill="none" stroke="#6d6d6d" stroke-width="0.9"/><path d="M3.4 6 H7.6 M3.4 8.3 H7.6 M4.8 4.4 L4.3 9.9 M6.6 4.4 L6.1 9.9" stroke="#2a6db5" stroke-width="0.9"/></svg>
<svg style="position:absolute;left:1050px;top:66px;" width="29" height="26" viewBox="0 0 29 26"><rect x="1.5" y="1.5" width="25.3" height="22.3" fill="#fff" stroke="#6d6d6d" stroke-width="1.2"/><path d="M5 13.5 L8.6 4.6 L12.2 13.5 M6.2 10.6 H11" stroke="#2a6db5" stroke-width="1.4" fill="none"/><path d="M14 5.3 H24.5 M14 8.2 H24.5 M14 11 H24.5 M14 13.6 H24.5 M4 16.4 H24.5 M4 19.4 H24.5" stroke="#9a9a9a" stroke-width="0.9"/></svg>
<svg style="position:absolute;left:1095px;top:64px;" width="13" height="16" viewBox="0 0 13 16"><rect x="1" y="1.4" width="10.4" height="12.8" rx="0.8" fill="#fff" stroke="#6d6d6d" stroke-width="1.1"/><path d="M2.6 3.6 H9.8" stroke="#f0a060" stroke-width="1"/><path d="M2.8 6 H4.4 V9 H2.8 Z" fill="#aaa"/><path d="M6 6.4 H9.6 M6 8.6 H9.6" stroke="#9a9a9a" stroke-width="0.8"/><path d="M2.6 11.4 H9.8" stroke="#2a6db5" stroke-width="1.2"/></svg>
<svg style="position:absolute;left:1095px;top:87px;" width="13" height="13" viewBox="0 0 13 13"><path d="M1.5 10.5 C4 8 7 3.5 10.5 1 L10 11.8 M3.8 7.6 H10.2" stroke="#2a6db5" stroke-width="1.7" fill="none" stroke-linecap="round"/></svg>
<svg style="position:absolute;left:1093px;top:105px;" width="18" height="18" viewBox="0 0 18 18"><path d="M1.5 8.5 L4.2 1.6 L6.9 8.5 M2.5 6 H5.9" stroke="#bdbdbd" stroke-width="1" fill="none"/><path d="M8.5 2 H15.5 M8.5 4.4 H15.5 M8.5 6.8 H15.5 M1.5 10.6 H15.5 M1.5 13.2 H15.5 M1.5 15.8 H15.5" stroke="#c9c9c9" stroke-width="0.9"/></svg>
<svg style="position:absolute;left:1123px;top:64px;" width="18" height="17" viewBox="0 0 18 17"><path d="M1 1 H8.2 L11.6 4.4 V6.5 M11.6 11.8 V14.6 H1 Z" fill="#fff" stroke="#6d6d6d" stroke-width="1.1"/><path d="M8.2 1 V4.4 H11.6" fill="none" stroke="#6d6d6d" stroke-width="0.9"/><path d="M5 13.8 L5.6 11 L13.4 3.2 L15.4 5.2 L7.6 13 Z" fill="#2a6db5"/><path d="M14.2 2.4 L15.2 1.4 L17 3.2 L16 4.2 Z" fill="#2a6db5"/></svg>
<svg style="position:absolute;left:1123px;top:85px;" width="16" height="17" viewBox="0 0 16 17"><rect x="1" y="1.5" width="11" height="10" fill="#fff" stroke="#6d6d6d" stroke-width="1" stroke-dasharray="1.4 0.6"/><rect x="1" y="1.2" width="11" height="1.6" fill="#6d6d6d"/><rect x="3" y="5" width="3.2" height="3" fill="none" stroke="#e06a3a" stroke-width="1"/><circle cx="11.6" cy="11.6" r="3.8" fill="#fff" stroke="#2a6db5" stroke-width="1.2"/><path d="M11.4 9.8 L12.6 12" stroke="#555" stroke-width="0.8"/></svg>
<svg style="position:absolute;left:1123px;top:107px;" width="17" height="15" viewBox="0 0 17 15"><rect x="1.4" y="1.8" width="14" height="11.6" fill="#fff" stroke="#2a6db5" stroke-width="1.3"/><rect x="1" y="1.2" width="14.8" height="2.4" fill="#1d5fae"/></svg>
<div class="t" id="t82" style="left:1171.5px;top:63.11px;font-size:17px;line-height:17px;color:#1d5fae;font-weight:400;transform:scaleX(1.3382);font-family:'Liberation Serif',serif;-webkit-text-stroke:0.6px #1d5fae;">π</div>
<div class="t" id="t83" style="left:1171.8px;top:85.60px;font-size:15px;line-height:15px;color:#1d5fae;font-weight:400;transform:scaleX(1.1473);font-family:'Liberation Serif',serif;-webkit-text-stroke:0.5px #1d5fae;">Ω</div>
<svg style="position:absolute;left:202px;top:740px;" width="16" height="15" viewBox="0 0 16 15"><rect x="1.8" y="2" width="5" height="9.6" rx="0.6" fill="none" stroke="#6a6a6a" stroke-width="1.1"/><path d="M7.2 2.6 V12.6" stroke="#6a6a6a" stroke-width="1.4"/><path d="M8 2.2 H12.6 M8 11.6 H12.6" stroke="#6a6a6a" stroke-width="1.1"/><path d="M9.6 5 L13.6 9.6 M13.6 5 L9.6 9.6" stroke="#6a6a6a" stroke-width="1.3"/></svg>
<svg style="position:absolute;left:1138px;top:740px;" width="15" height="14" viewBox="0 0 15 14"><path d="M1 1.5 H6 L7.5 2.5 L9 1.5 H14 V11.5 H9 L7.5 12.5 L6 11.5 H1 Z" fill="#fff" stroke="#666" stroke-width="1"/><path d="M7.5 2.5 V12.5" stroke="#666" stroke-width="1.3"/><path d="M3 4.5 H5.5 M3 6.8 H5.5 M3 9 H5.5 M9.5 4.5 H12 M9.5 6.8 H12 M9.5 9 H12" stroke="#888" stroke-width="0.9"/></svg>
<div style="left:1163px;top:739px;width:34px;height:19px;background:#c8c8c8;"></div>
<svg style="position:absolute;left:1172px;top:740px;" width="16" height="15" viewBox="0 0 16 15"><rect x="1.5" y="1.3" width="13" height="12.4" rx="1.5" fill="#8a8a8a" stroke="#666" stroke-width="1"/><path d="M3.5 4 H12.5 M3.5 6.3 H12.5 M3.5 8.6 H12.5 M3.5 10.9 H12.5" stroke="#bdbdbd" stroke-width="0.9"/></svg>
<svg style="position:absolute;left:1207px;top:740px;" width="17" height="16" viewBox="0 0 17 16"><rect x="1.3" y="1.3" width="12" height="11" rx="1" fill="#fff" stroke="#777" stroke-width="1"/><path d="M3.4 4 H10.5 M3.4 6.5 H7.5 M3.4 9 H7" stroke="#999" stroke-width="0.9"/><circle cx="11.5" cy="11.3" r="4" fill="#777"/><path d="M9.6 10.5 L11.6 12.6 M12.4 9.4 L13.3 10.2" stroke="#fff" stroke-width="1"/></svg>
<div style="left:1236.5px;top:747px;width:5.5px;height:1.8px;background:#666;"></div>
<div style="left:1246px;top:748px;width:91px;height:1px;background:#a0a0a0;"></div>
<div style="left:1291.5px;top:745px;width:1px;height:6px;background:#b8b8b8;"></div>
<div style="left:1270px;top:743px;width:5px;height:9px;background:#6a6a6a;"></div>
<svg style="position:absolute;left:1339px;top:744px;" width="9" height="9" viewBox="0 0 9 9"><path d="M4.5 0.5 V8.5 M0.5 4.5 H8.5" stroke="#555" stroke-width="1.6"/></svg>
<div style="left:1335.5px;top:703.5px;width:51px;height:51px;border-radius:50%;background:rgba(255,255,255,0.9);border:1px solid #dedede;box-shadow:0 0 2px rgba(0,0,0,0.10)"></div>
<svg style="position:absolute;left:1330px;top:700px;" width="60" height="56" viewBox="0 0 60 56"><path d="M34 41.5 C33 37 29 34.5 23 31.5 C16.5 28.5 14 24 15 18 C16.5 10.5 23.5 7 31 7.3 C38 7.6 43.5 11 43.5 17.5 C43.5 23 40 26.5 40.2 31 C40.4 35 41 38.5 34.5 42 C34 44 38 43 44.5 41.5 C46 42 40 47 35.5 48 C33 48.3 34 45.5 38 43.5" fill="none" stroke="#3f7fc0" stroke-width="1.6" stroke-linecap="round"/></svg>
<div class="t" id="t84" style="left:1357.5px;top:742.89px;font-size:11px;line-height:11px;color:#6a6a6a;font-weight:400;transform:scaleX(0.8306);">60%</div>
<svg style="position:absolute;left:905.5px;top:130.5px;" width="12" height="15" viewBox="0 0 12 15"><path d="M0.8 0.8 H6.8 L10.3 4.3 V12.9 H0.8 Z" fill="#fff" stroke="#6d6d6d" stroke-width="1.2" stroke-linejoin="round"/><path d="M1.5999999999999996 3.5 H6.0 M1.5999999999999996 5.5 H6.0 M2.9 1.9 V7.1 M4.7 1.9 V7.1" stroke="#2a6db5" stroke-width="1"/><path d="M2.6 8.3 H8.6 M2.6 10.5 H8.6" stroke="#aaa" stroke-width="0.8"/></svg>
<svg style="position:absolute;left:905.5px;top:152.5px;" width="12" height="15" viewBox="0 0 12 15"><path d="M0.8 0.8 H6.8 L10.3 4.3 V12.9 H0.8 Z" fill="#fff" stroke="#6d6d6d" stroke-width="1.2" stroke-linejoin="round"/><path d="M2.6 3 H6 M2.6 5.2 H8.6" stroke="#aaa" stroke-width="0.8"/><path d="M3.0 8.5 H7.4 M3.0 10.5 H7.4 M4.3 6.9 V12.1 M6.1000000000000005 6.9 V12.1" stroke="#2a6db5" stroke-width="1"/></svg>
<svg style="position:absolute;left:905.5px;top:174.5px;" width="12" height="15" viewBox="0 0 12 15"><path d="M0.8 0.8 H6.8 L10.3 4.3 V12.9 H0.8 Z" fill="#fff" stroke="#6d6d6d" stroke-width="1.2" stroke-linejoin="round"/><path d="M1.5999999999999996 6.8 H6.0 M1.5999999999999996 8.8 H6.0 M2.9 5.199999999999999 V10.4 M4.7 5.199999999999999 V10.4" stroke="#2a6db5" stroke-width="1"/><path d="M8.5 5 V11" stroke="#aaa" stroke-width="0.8" stroke-dasharray="1 1"/></svg>
<svg style="position:absolute;left:905.5px;top:196.5px;" width="12" height="15" viewBox="0 0 12 15"><path d="M0.8 0.8 H6.8 L10.3 4.3 V12.9 H0.8 Z" fill="#fff" stroke="#6d6d6d" stroke-width="1.2" stroke-linejoin="round"/><path d="M3.0 6.5 H7.4 M3.0 8.5 H7.4 M4.3 4.9 V10.1 M6.1000000000000005 4.9 V10.1" stroke="#2a6db5" stroke-width="1"/></svg>
<svg style="position:absolute;left:902px;top:216px;" width="18" height="19" viewBox="0 0 18 19"><path d="M1 1 H6.5 L10 4.5 V14.5 H1 Z" fill="#fff" stroke="#6d6d6d" stroke-width="1.2" stroke-linejoin="round"/><path d="M3 5.5 H5.5 M3 7.3 H5.5" stroke="#777" stroke-width="0.8"/><rect x="7.5" y="6.6" width="9.5" height="10.8" rx="1" fill="#fff" stroke="#6d6d6d" stroke-width="1.2"/><path d="M9.8 10 H11 M13.4 10 H14.6 M9.8 13.6 H11 M13.4 13.6 H14.6" stroke="#777" stroke-width="1"/></svg>
<svg style="position:absolute;left:902px;top:239px;" width="18" height="19" viewBox="0 0 18 19"><path d="M1.5 14.5 V1 H7 L10 4" fill="none" stroke="#6d6d6d" stroke-width="1.2"/><path d="M1.5 14.5 H5" stroke="#6d6d6d" stroke-width="1.2"/><path d="M3.5 5 H6 M3.5 6.8 H5" stroke="#777" stroke-width="0.8"/><path d="M7.8 8.6 L16.2 17 M16.2 8.6 L7.8 17" stroke="#e8231e" stroke-width="1.8"/></svg>
<div style="left:947px;top:143.6px;width:5px;height:1px;background:#555;"></div>
<div style="left:930px;top:165.5px;width:6px;height:1px;background:#555;"></div>
<div style="left:930px;top:187.7px;width:10px;height:1px;background:#555;"></div>
<div style="left:930px;top:209.4px;width:7px;height:1px;background:#555;"></div>
<div style="left:990px;top:233.1px;width:7px;height:1px;background:#555;"></div>
<div style="left:930px;top:255px;width:8px;height:1px;background:#555;"></div>
</body></html>
